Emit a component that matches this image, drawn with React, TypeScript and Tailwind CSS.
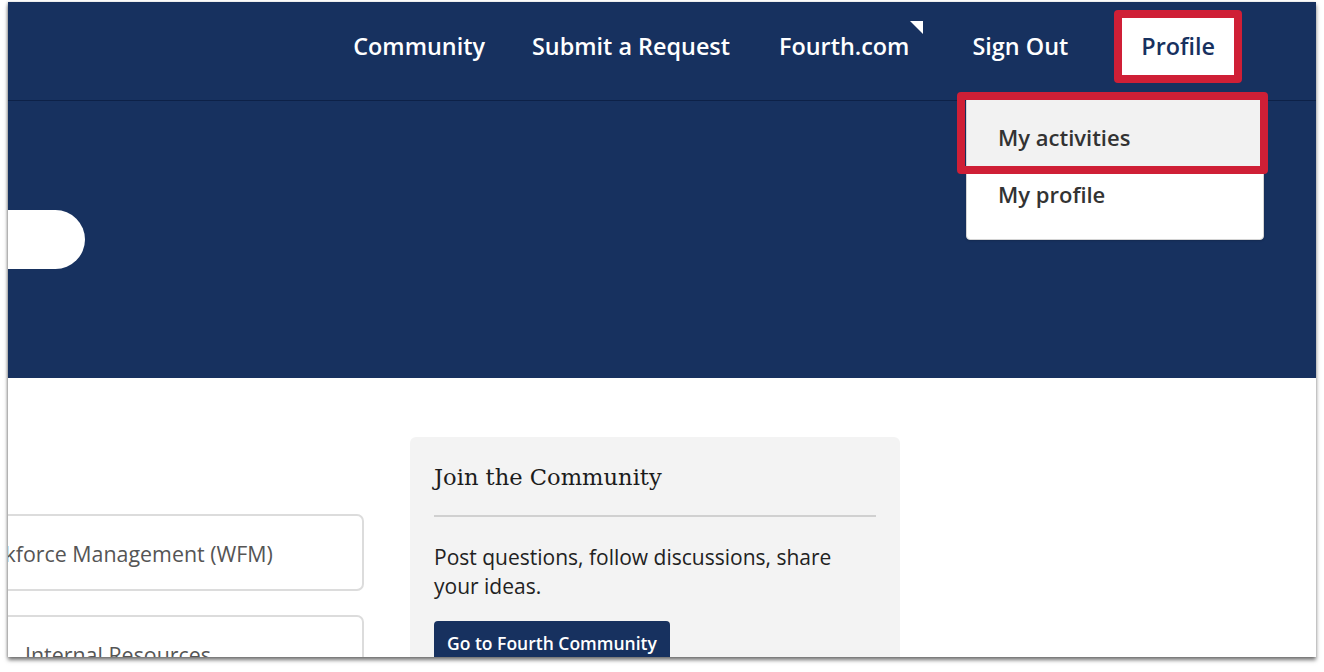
export default function App() {
  return (
    <div className="w-[1324px] h-[672px] bg-white pt-[2px] pl-[8px] font-['Open_Sans',sans-serif]">
      <div className="relative w-[1308px] h-[655px] overflow-hidden bg-white shadow-[0_3px_4px_rgba(0,0,0,0.55),-1px_0_2px_rgba(0,0,0,0.15)]">
        {/* top nav */}
        <header className="h-[99px] bg-[#17315f] border-b border-[#0d2147] flex items-start justify-end pt-[8px] pr-[74px]">
          <nav className="flex items-center text-[23.4px] font-semibold text-white">
            <a className="mr-[47px]">Community</a>
            <a className="mr-[49px]">Submit a Request</a>
            <a className="relative mr-[63px]">
              Fourth.com
              <span className="absolute -right-[14px] top-[-8px] w-0 h-0 border-t-[13px] border-l-[13px] border-t-white border-l-transparent" />
            </a>
            <a className="mr-[46px]">Sign Out</a>
            <div className="border-[8px] border-[#cf1f36] rounded-[4px]">
              <div className="bg-white px-[19px] h-[57px] flex items-center text-[#17315f]">Profile</div>
            </div>
          </nav>
        </header>

        {/* hero */}
        <section className="h-[277px] bg-[#17315f] pt-[109px]">
          <div className="-ml-[400px] w-[477px] h-[59px] bg-white rounded-full" />
        </section>

        {/* main */}
        <main className="flex items-start">
          <div className="-ml-[128px] w-[484px] pt-[136px] flex flex-col gap-[24px]">
            <div className="h-[77px] border-2 border-[#dcdcdc] rounded-[7px] flex items-center justify-center pr-[8px] pt-[3px] text-[21.4px] text-[#555]">
              Workforce Management (WFM)
            </div>
            <div className="h-[77px] border-2 border-[#dcdcdc] rounded-[7px] flex items-center justify-center pr-[8px] pt-[3px] text-[21.4px] text-[#555]">
              Internal Resources
            </div>
          </div>
          <div className="ml-[46px] mt-[59px] w-[490px] h-[260px] bg-[#f3f3f3] rounded-[6px] px-[24px] pt-[22px]">
            <h2 className="font-['DejaVu_Serif',serif] text-[22.6px] text-[#1c1c1c] leading-[36px]">
              Join the Community
            </h2>
            <div className="mt-[20px] h-[2px] bg-[#d0d0d0]" />
            <p className="mt-[26px] text-[21px] leading-[29px] text-[#222]">
              Post questions, follow discussions, share your ideas.
            </p>
            <button className="mt-[20px] h-[44px] px-[13px] bg-[#17315f] rounded-[4px] text-white text-[17.5px] font-semibold">
              Go to Fourth Community
            </button>
          </div>
        </main>

        {/* profile dropdown */}
        <div className="absolute left-[958px] top-[94px] w-[298px] h-[144px] bg-white rounded-[4px] border border-[#d4d4d4] shadow-[0_1px_2px_rgba(0,0,0,0.15)]">
          <div className="h-[70px] pt-[10px] bg-[#f2f2f2] flex items-center pl-[31px] text-[22px] font-semibold text-[#333]">
            My activities
          </div>
          <div className="h-[54px] flex items-center pl-[31px] text-[22px] font-semibold text-[#333]">
            My profile
          </div>
        </div>
        <div className="absolute left-[949px] top-[90px] w-[311px] h-[82px] border-[8px] border-[#cf1f36] rounded-[4px]" />
      </div>
    </div>
  );
}
